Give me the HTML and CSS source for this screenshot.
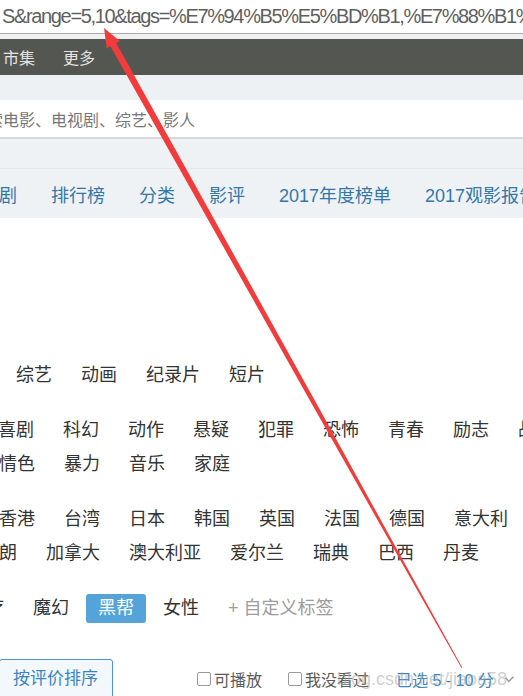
FILE: index.html
```html
<!DOCTYPE html>
<html lang="zh-CN">
<head>
<meta charset="utf-8">
<title>豆瓣电影 分类</title>
<link rel="stylesheet" href="styles.css">
</head>
<body>
<div class="url">S&amp;range=5,10&amp;tags=%E7%94%B5%E5%BD%B1,%E7%88%B1%E6%83%85</div>
<div class="url-gap"></div>
<div class="topnav"><span>市集</span><span>更多</span></div>
<div class="search-area">
  <div class="search-input"><span class="ph">搜索电影、电视剧、综艺、影人</span></div>
</div>
<div class="subnav-top"></div>
<div class="subnav">
  <a>电视剧</a><a>排行榜</a><a>分类</a><a>影评</a><a>2017年度榜单</a><a>2017观影报告</a>
</div>
<div class="content">
  <div class="group">
    <div class="row r1"><span class="tag">电视剧</span><span class="tag">综艺</span><span class="tag">动画</span><span class="tag">纪录片</span><span class="tag">短片</span></div>
  </div>
  <div class="group">
    <div class="row r2"><span class="tag">剧情</span><span class="tag">喜剧</span><span class="tag">科幻</span><span class="tag">动作</span><span class="tag">悬疑</span><span class="tag">犯罪</span><span class="tag">恐怖</span><span class="tag">青春</span><span class="tag">励志</span><span class="tag">战争</span></div>
    <div class="row r3"><span class="tag">情色</span><span class="tag">暴力</span><span class="tag">音乐</span><span class="tag">家庭</span></div>
  </div>
  <div class="group">
    <div class="row r4"><span class="tag">香港</span><span class="tag">台湾</span><span class="tag">日本</span><span class="tag">韩国</span><span class="tag">英国</span><span class="tag">法国</span><span class="tag">德国</span><span class="tag">意大利</span></div>
    <div class="row r5"><span class="tag">伊朗</span><span class="tag">加拿大</span><span class="tag">澳大利亚</span><span class="tag">爱尔兰</span><span class="tag">瑞典</span><span class="tag">巴西</span><span class="tag">丹麦</span></div>
  </div>
  <div class="group last">
    <div class="row r6"><span class="tag">治疗</span><span class="tag">魔幻</span><span class="tag on">黑帮</span><span class="tag">女性</span><span class="tag add">+ 自定义标签</span></div>
  </div>
  <div class="toolbar">
    <span class="sort-btn">按评价排序</span>
    <label class="check c1"><span class="box"></span>可播放</label>
    <label class="check c2"><span class="box"></span>我没看过</label>
    <span class="range">已选 5 - 10 分</span>
    <svg class="chev" width="9" height="7" viewBox="0 0 9 7"><polyline points="0.5,1.5 3.8,5.5 8.5,0.8" fill="none" stroke="#9a9a9a" stroke-width="1.4"/></svg>
  </div>
</div>
<div class="watermark">blog.csdn.net/jiaoa58</div>
<svg class="arrow" width="523" height="696" viewBox="0 0 523 696">
  <polygon fill="#f23c3c" points="104,28 119.8,40.9 116.2,43 314,398.9 424.7,599.6 462.35,667.8 461.65,668.2 423.1,600.4 310.2,401.1 110.4,46.2 106.7,48.3"/>
</svg>
</body>
</html>
```
FILE: styles.css
```css
html, body {
  margin: 0;
  padding: 0;
}
body {
  width: 523px;
  height: 696px;
  overflow: hidden;
  position: relative;
  background: #fff;
  font-family: "Liberation Sans", "Noto Sans CJK SC", sans-serif;
}
.url {
  height: 33px;
  line-height: 32px;
  font-size: 20px;
  color: #5f5f5f;
  white-space: nowrap;
  overflow: hidden;
  border-bottom: 1px solid #a8a8a8;
  letter-spacing: -1.35px;
  padding-left: 2px;
}
.url-gap {
  height: 5px;
  background: #f0f0f0;
}
.topnav {
  height: 36px;
  background: #545652;
  display: flex;
  align-items: center;
  gap: 28px;
  padding-left: 3px;
  font-size: 16px;
  color: #e4e4e4;
}
.search-area {
  background: #edf1f4;
  padding-top: 25px;
}
.search-input {
  height: 37px;
  background: #fff;
  border-bottom: 2px solid #d6d9db;
  display: flex;
  align-items: center;
  font-size: 16px;
  color: #777;
  white-space: nowrap;
  overflow: hidden;
}
.ph {
  margin-left: -29px;
}
.subnav-top {
  height: 29px;
  background: #eef2f5;
  border-bottom: 1px solid #e2e7eb;
}
.subnav {
  height: 49px;
  background: #eef2f5;
  display: flex;
  align-items: center;
  gap: 34px;
  margin-left: -37px;
  font-size: 18px;
  color: #3377aa;
  white-space: nowrap;
}
.content {
  padding-top: 143px;
}
.group {
  margin-bottom: 21px;
}
.group.last {
  margin-bottom: 0;
}
.row {
  display: flex;
  white-space: nowrap;
  font-size: 18px;
  color: #333;
}
.tag {
  flex: none;
  padding: 0 12px;
  height: 29px;
  line-height: 29px;
  margin: 0 5px 5px 0;
  border-radius: 3px;
}
.r1 { margin-left: -79px; }
.r2 { margin-left: -79px; }
.r3 { margin-left: -13px; }
.r4 { margin-left: -13px; }
.r5 { margin-left: -31px; }
.r6 { margin-left: -44px; }
.tag.on {
  background: #55a4d9;
  color: #fff;
}
.tag.add {
  color: #9d9d9d;
}
.toolbar {
  display: flex;
  align-items: center;
  margin-top: 31px;
  white-space: nowrap;
}
.sort-btn {
  flex: none;
  margin-left: -1px;
  height: 40px;
  box-sizing: border-box;
  border: 1px solid #4c93cf;
  border-radius: 3px;
  background: #f3f8fc;
  color: #3a84c4;
  font-size: 17px;
  line-height: 38px;
  padding: 0 14px 0 13px;
}
.check {
  display: flex;
  align-items: center;
  font-size: 16px;
  color: #5a5a5a;
}
.box {
  width: 12px;
  height: 12px;
  border: 1px solid #9a9a9a;
  border-radius: 2px;
  margin-right: 3px;
  background: #fff;
}
.c1 { margin-left: 84px; }
.c2 { margin-left: 26px; }
.range {
  margin-left: 27px;
  font-size: 16px;
  color: #3b86c8;
}
.chev {
  margin-left: 11px;
}
.watermark {
  position: absolute;
  left: 337px;
  top: 668px;
  line-height: 22px;
  font-size: 18px;
  color: rgba(160, 160, 160, 0.5);
  white-space: nowrap;
}
.arrow {
  position: absolute;
  left: 0;
  top: 0;
  pointer-events: none;
}
```
